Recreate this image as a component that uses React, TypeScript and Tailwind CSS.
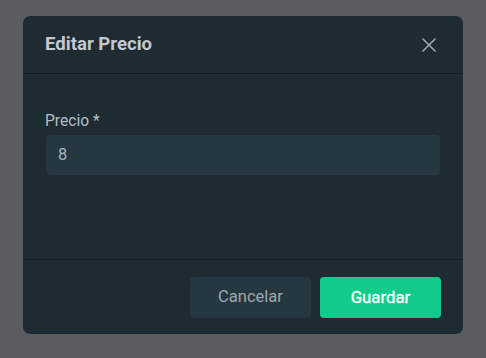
import React from "react";

export default function App() {
  return (
    <div
      className="w-[486px] h-[358px] bg-[#5b5c5e] pt-[16px] pl-[23px]"
      style={{ fontFamily: "Roboto, 'Liberation Sans', sans-serif" }}
    >
      <div className="w-[440px] h-[318px] bg-[#1e2b32] rounded-[7px] flex flex-col overflow-hidden">
        <div className="h-[58px] flex items-center justify-between pl-[22px] pr-[27px] border-b border-[#121c22] shrink-0">
          <h2 className="text-[18.6px] font-bold text-[#c3c9cf] leading-none">Editar Precio</h2>
          <svg width="14" height="14" viewBox="0 0 14 14" className="text-[#a0a8ae]">
            <path d="M1 1 L13 13 M13 1 L1 13" stroke="currentColor" strokeWidth="1.6" strokeLinecap="round" />
          </svg>
        </div>
        <div className="h-[186px] px-[23px] pt-[37px] border-b border-[#121c22] shrink-0">
          <label className="block text-[15.6px] leading-[20px] text-[#b4bec6] mb-[4px] -ml-px">
            Precio *
          </label>
          <div className="h-[40px] rounded-[4px] bg-[#253740] flex items-center pl-[12px] text-[16.5px] text-[#a9b5bf]">
            8
          </div>
        </div>
        <div className="flex-1 flex justify-end items-start pt-[17px] pr-[22px] gap-[9px]">
          <button className="w-[121px] h-[41px] rounded-[4px] bg-[#253740] text-[16.5px] text-[#9ea8b1]">
            Cancelar
          </button>
          <button className="w-[121px] h-[41px] rounded-[4px] bg-[#12cb8a] text-[16.8px] font-normal text-white [-webkit-text-stroke:0.35px_white]">
            Guardar
          </button>
        </div>
      </div>
    </div>
  );
}
